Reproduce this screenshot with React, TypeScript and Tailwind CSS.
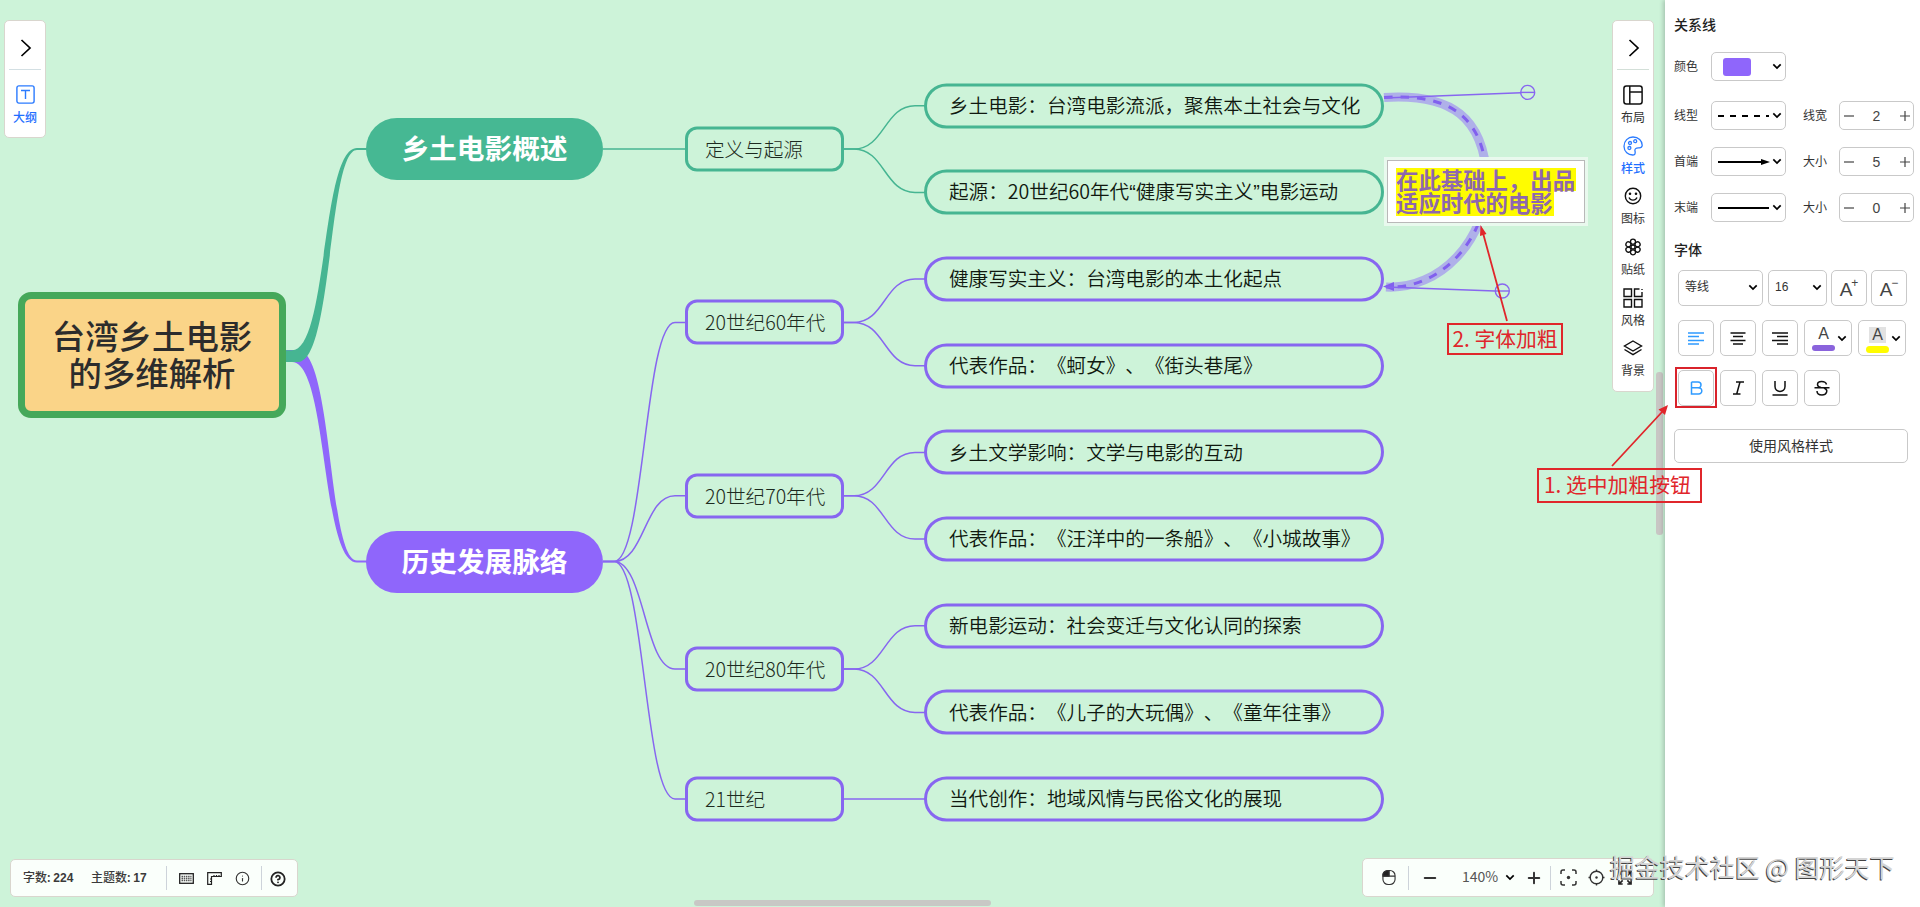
import React from 'react';
import { Info, CircleHelp, Minus, Plus } from 'lucide-react';

type Tone = 'green' | 'purple';

interface Leaf {
  text: string;
  y: number;
}

interface Topic {
  text: string;
  y: number;
  leaves: Leaf[];
}

interface Branch {
  text: string;
  y: number;
  tone: Tone;
  topics: Topic[];
}

const COLORS: Record<Tone, string> = { green: '#46b592', purple: '#8766f0' };

const branches: Branch[] = [
  {
    text: '乡土电影概述',
    y: 149,
    tone: 'green',
    topics: [
      {
        text: '定义与起源',
        y: 149,
        leaves: [
          { text: '乡土电影：台湾电影流派，聚焦本土社会与文化', y: 105.7 },
          { text: '起源：20世纪60年代“健康写实主义”电影运动', y: 192.4 },
        ],
      },
    ],
  },
  {
    text: '历史发展脉络',
    y: 561.5,
    tone: 'purple',
    topics: [
      {
        text: '20世纪60年代',
        y: 322.4,
        leaves: [
          { text: '健康写实主义：台湾电影的本土化起点', y: 279 },
          { text: '代表作品：《蚵女》、《街头巷尾》', y: 365.7 },
        ],
      },
      {
        text: '20世纪70年代',
        y: 495.8,
        leaves: [
          { text: '乡土文学影响：文学与电影的互动', y: 452.4 },
          { text: '代表作品：《汪洋中的一条船》、《小城故事》', y: 539 },
        ],
      },
      {
        text: '20世纪80年代',
        y: 669,
        leaves: [
          { text: '新电影运动：社会变迁与文化认同的探索', y: 625.7 },
          { text: '代表作品：《儿子的大玩偶》、《童年往事》', y: 712.4 },
        ],
      },
      {
        text: '21世纪',
        y: 799,
        leaves: [{ text: '当代创作：地域风情与民俗文化的展现', y: 799 }],
      },
    ],
  },
];

const link = (x1: number, y1: number, x2: number, y2: number) => {
  const a = x1 + 11;
  const b = x2 - 11;
  const m = (a + b) / 2;
  return `M${x1} ${y1}H${a}C${m} ${y1} ${m} ${y2} ${b} ${y2}H${x2}`;
};

const Links: React.FC = () => (
  <svg className="absolute inset-0" width="1664" height="907" fill="none">
    {/* tapered trunks */}
    <path d="M286 350H298C333 350 328 560.5 357 560.5H367V562.5H357C321 562.5 328 362 292 362H286Z" fill="#8f66fb" />
    <path d="M286 350.3H292C328 350.3 321 148 357 148H367V150H357C328 150 333 362 298 362H286Z" fill="#46b592" />
    {branches.map(b =>
      b.topics.map(t => (
        <g key={t.text} stroke={COLORS[b.tone]} strokeWidth="1.5">
          <path d={link(603, b.y, 686, t.y)} />
          {t.leaves.map(l => (
            <path key={l.text} d={link(843, t.y, 926, l.y)} />
          ))}
        </g>
      ))
    )}
  </svg>
);

const Node: React.FC<{ y: number; className: string; children: React.ReactNode }> = ({ y, className, children }) => (
  <div className={`absolute flex -translate-y-1/2 items-center whitespace-nowrap ${className}`} style={{ top: y }}>
    {children}
  </div>
);

// curly quotes are full width in the CJK face, so they take the Latin one
const withQuotes = (text: string) =>
  text.split(/([“”])/).map((part, i) =>
    part === '“' || part === '”' ? <span key={i} className="font-['Liberation_Sans',sans-serif]">{part}</span> : part
  );

const MindMap: React.FC = () => (
  <>
    <Links />
    <Node y={355.3} className="left-[18px] h-[126px] w-[268px] justify-center rounded-[13px] border-[7px] border-[#45a85a] bg-[#fad488] pb-[4px] text-center text-[33.4px] leading-[37px] font-medium text-[#2c2c2c]">
      <span>台湾乡土电影<br />的多维解析</span>
    </Node>
    {branches.map(b => (
      <React.Fragment key={b.text}>
        <Node y={b.y} className={`left-[366px] h-[62px] w-[237px] justify-center rounded-full pb-[2px] text-[27.7px] font-bold text-white ${b.tone === 'green' ? 'bg-[#46b893]' : 'bg-[#8f66fb]'}`}>
          {b.text}
        </Node>
        {b.topics.map(t => (
          <React.Fragment key={t.text}>
            <Node y={t.y} className={`left-[685px] h-[45px] w-[159px] rounded-[12px] border-[3px] pb-[2px] pl-[17px] text-[19.6px] font-light text-[#1c2a20] ${b.tone === 'green' ? 'border-[#46b592]' : 'border-[#8766f0]'}`}>
              {t.text}
            </Node>
            {t.leaves.map(l => (
              <Node key={l.text} y={l.y} className={`left-[924px] h-[45px] w-[460px] rounded-full border-[3px] pb-[3px] pl-[22px] text-[19.6px] text-[#10180f] ${b.tone === 'green' ? 'border-[#46b592]' : 'border-[#8766f0]'}`}>
                <span className="font-[350]">{withQuotes(l.text)}</span>
              </Node>
            ))}
          </React.Fragment>
        ))}
      </React.Fragment>
    ))}
  </>
);

const RELATION = 'M1384 97.5C1452 93 1484 118 1487 180C1487 240 1440 290 1386 287';

const Relation: React.FC = () => (
  <>
    <svg className="absolute inset-0" width="1664" height="907" fill="none">
      <path d={RELATION} stroke="#8f66fb" strokeOpacity="0.48" strokeWidth="9" />
      <path d={RELATION} stroke="#8160ee" strokeWidth="3" strokeDasharray="8.5 8" />
      <path d="M1383 286.5L1394 282V291Z" fill="#8160ee" />
      <g stroke="#8766f0" strokeWidth="1.4">
        <path d="M1384 98L1521 92.7M1386 287L1495 291" />
        <circle cx="1527.7" cy="92.4" r="7" />
        <path d="M1521 92.4H1534" />
        <circle cx="1502.3" cy="291" r="7" />
        <path d="M1495 291H1509" />
      </g>
    </svg>
    <div className="absolute top-[160px] left-[1387px] h-[63px] w-[198px] border border-[#b9b9b9] bg-white pt-[7px] pl-[8px] shadow-[0_0_0_3px_#e9f9ee] text-[22.4px] leading-[22.4px] font-bold text-[#8e67ae]">
      <div className="h-[23px] w-[180px] bg-[#fffc00] whitespace-nowrap">在此基础上，出品</div>
      <div className="h-[25px] w-[158px] bg-[#fffc00] whitespace-nowrap">适应时代的电影</div>
    </div>
  </>
);

const Chevron: React.FC = () => (
  <svg width="12" height="18" viewBox="0 0 12 18" fill="none" stroke="#000" strokeWidth="1.7">
    <path d="M1.5 1L10 9L1.5 17" />
  </svg>
);

const Caret: React.FC = () => (
  <svg width="10" height="7" viewBox="0 0 10 7" fill="none" stroke="#000" strokeWidth="1.7" className="shrink-0">
    <path d="M1.3 1.3L5 5L8.7 1.3" />
  </svg>
);

const LayoutIcon = () => (
  <svg width="20" height="20" viewBox="0 0 20 20" fill="none" stroke="#111" strokeWidth="1.5">
    <rect x="0.9" y="0.9" width="18.2" height="18.2" rx="2.5" />
    <path d="M6.8 1V19M6.8 7H19" />
  </svg>
);

const PaletteIcon = () => (
  <svg width="20" height="20" viewBox="0 0 20 20" fill="none" stroke="#2b7bff" strokeWidth="1.3">
    <path d="M11 18.9C5 19.6 1 15.3 1 10.2C1 5 5 1 10 1C15.5 1 19.3 5 19.2 9.5C19 11.2 17.5 12 15.5 11.8C13 11.7 11.5 13 12 15C12.3 16.5 12.4 18.4 11 18.9Z" />
    <circle cx="7" cy="7" r="1.5" />
    <circle cx="12.2" cy="5.2" r="1.5" />
    <circle cx="6.4" cy="12" r="1.5" />
  </svg>
);

const SmileIcon = () => (
  <svg width="18" height="18" viewBox="0 0 18 18" fill="none" stroke="#111" strokeWidth="1.4">
    <circle cx="9" cy="9" r="7.7" />
    <path d="M5 10.5C6.5 14 11.5 14 13 10.5" />
    <circle cx="6" cy="6.8" r="0.6" fill="#111" />
    <circle cx="12" cy="6.8" r="0.6" fill="#111" />
  </svg>
);

const FlowerIcon = () => (
  <svg width="18" height="18" viewBox="-9 -9 18 18" fill="none" stroke="#111" strokeWidth="1.3">
    {[0, 60, 120, 180, 240, 300].map(a => (
      <circle key={a} cx="0" cy="-5.3" r="2.5" transform={`rotate(${a})`} />
    ))}
    <circle r="2" />
  </svg>
);

const GridIcon = () => (
  <svg width="20" height="20" viewBox="0 0 20 20" fill="none" stroke="#111" strokeWidth="1.4">
    <path d="M1 1H8.5V8.5H1ZM1 11.5H8.5V19H1ZM11.5 11.5H19V19H11.5ZM16.5 1H11.5V8.5H19V4M19 1V2" />
  </svg>
);

const LayersIcon = () => (
  <svg width="20" height="16" viewBox="0 0 20 16" fill="none" stroke="#111" strokeWidth="1.4">
    <path d="M10 1L18.5 6L10 11L1.5 6Z" />
    <path d="M1.5 9.5L10 14.6L18.5 9.5" />
  </svg>
);

const tools = [
  { label: '布局', icon: <LayoutIcon /> },
  { label: '样式', icon: <PaletteIcon />, active: true },
  { label: '图标', icon: <SmileIcon /> },
  { label: '贴纸', icon: <FlowerIcon /> },
  { label: '风格', icon: <GridIcon /> },
  { label: '背景', icon: <LayersIcon /> },
];

const OutlineBar: React.FC = () => (
  <div className="absolute top-[20px] left-[4px] flex h-[118px] w-[42px] flex-col items-center rounded-[5px] border border-[#d9d6ce] bg-white">
    <div className="flex h-[49px] w-[32px] items-center justify-center border-b border-[#d3dfe3] pt-[6px] pl-px">
      <Chevron />
    </div>
    <svg className="mt-[15px]" width="19" height="19" viewBox="0 0 19 19" fill="none" stroke="#2b7bff" strokeWidth="1.4">
      <rect x="0.9" y="0.9" width="17.2" height="17.2" rx="2" />
      <path d="M5 5.5H14M9.5 5.5V14" />
    </svg>
    <span className="mt-[5px] text-xs leading-4 font-medium text-[#1f6fff]">大纲</span>
  </div>
);

const ToolBar: React.FC = () => (
  <div className="absolute top-[20px] left-[1612px] flex h-[372px] w-[42px] flex-col items-center rounded-[5px] border border-[#d9d6ce] bg-white">
    <div className="mb-[13px] flex h-[49px] w-[32px] items-center justify-center border-b border-[#d3dfd8] pt-[6px] pl-px">
      <Chevron />
    </div>
    {tools.map(t => (
      <div key={t.label} className={`flex h-[50.7px] w-full shrink-0 flex-col items-center text-xs leading-4 ${t.active ? 'font-medium text-[#1f6fff]' : 'text-[#333]'}`}>
        <span className="flex h-6 items-center">{t.icon}</span>
        <span className="mt-[2px]">{t.label}</span>
      </div>
    ))}
  </div>
);

const StatusBar: React.FC = () => (
  <div className="absolute top-[859px] left-[10px] flex h-[38px] w-[288px] items-center rounded-[5px] border border-[#d9d6ce] bg-[#fafffb] pl-[12px] text-xs font-medium text-[#3a3a3a]">
    <span className="w-[68px] whitespace-nowrap pb-[2px]">字数: <span className="font-['Liberation_Sans',sans-serif] font-bold">224</span></span>
    <span className="w-[75px] whitespace-nowrap pb-[2px]">主题数: <span className="font-['Liberation_Sans',sans-serif] font-bold">17</span></span>
    <span className="h-6 w-px bg-[#cdd3da]" />
    <svg className="mt-px ml-[12px]" width="15" height="11" viewBox="0 0 15 11" fill="none" stroke="#222" strokeWidth="1.3">
      <rect x="0.7" y="0.7" width="13.6" height="9.6" />
      <path d="M2.5 3.5H12.5M2.5 5.5H12.5M2.5 7.5H12.5" strokeDasharray="1.5 0.7" stroke="#555" />
    </svg>
    <svg className="ml-[13px]" width="15" height="13" viewBox="0 0 15 13" fill="none" stroke="#222" strokeWidth="1.2">
      <path d="M0.7 0.7H14.3V4.5H4.5V12.3H0.7ZM3 7H4.5M3 9.5H4.5M7 3V4.5M9.5 3V4.5M12 3V4.5" />
    </svg>
    <Info size={15} strokeWidth={1.8} className="mt-px ml-[13px] text-[#333]" />
    <span className="ml-[11px] h-6 w-px bg-[#cdd3da]" />
    <CircleHelp size={16} strokeWidth={2.7} className="mt-px ml-[8px] text-[#222]" />
  </div>
);

const ZoomBar: React.FC = () => (
  <div className="absolute top-[858px] left-[1362px] flex h-[39px] w-[292px] items-center rounded-[5px] border border-[#d9d6ce] bg-[#fafffb] pl-[19px] text-[#333]">
    <svg width="14" height="17" viewBox="0 0 15 17" fill="none" stroke="#333" strokeWidth="1.2">
      <rect x="1" y="1" width="13" height="15" rx="5.5" />
      <path d="M1 7H14M7.5 1V7" />
      <path d="M1 7V5C1.5 2.5 4 1 7.5 1V7Z" fill="#222" />
    </svg>
    <span className="ml-[12px] h-6 w-px bg-[#cdd3da]" />
    <Minus size={18} strokeWidth={2.6} className="ml-[12px]" />
    <span className="ml-[23px] w-[43px] pb-[2px] text-[14px] text-[#555]">140%</span>
    <Caret />
    <Plus size={18} strokeWidth={2.6} className="ml-[10px]" />
    <span className="ml-[7px] h-6 w-px bg-[#cdd3da]" />
    <svg className="ml-[9px]" width="17" height="17" viewBox="0 0 17 17" fill="none" stroke="#333" strokeWidth="1.5">
      <path d="M1 5V3Q1 1 3 1H5M12 1H14Q16 1 16 3V5M16 12V14Q16 16 14 16H12M5 16H3Q1 16 1 14V12" />
      <circle cx="8.5" cy="8.5" r="1.7" fill="#333" stroke="none" />
    </svg>
    <svg className="ml-[11px]" width="17" height="17" viewBox="0 0 17 17" fill="none" stroke="#333" strokeWidth="1.4">
      <circle cx="8.5" cy="8.5" r="6.3" />
      <path d="M8.5 0.5V3M8.5 14V16.5M0.5 8.5H3M14 8.5H16.5" />
      <circle cx="8.5" cy="8.5" r="1.2" fill="#333" stroke="none" />
    </svg>
    <svg className="ml-[13px]" width="14" height="14" viewBox="0 0 15 15" fill="none" stroke="#222" strokeWidth="1.7">
      <path d="M1 5V1H5M10 1H14V5M14 10V14H10M5 14H1V10M1 1L5 5M14 1L10 5M14 14L10 10M1 14L5 10" />
    </svg>
  </div>
);

const box = 'flex items-center rounded-[5px] border border-[#c9c9c9] bg-white';

const Stepper: React.FC<{ value: number }> = ({ value }) => (
  <div className={`${box} h-[29px] w-[75px] justify-between pr-[3px] pl-[4px] text-sm text-[#444]`}>
    <svg width="10" height="10" stroke="#444" strokeWidth="1.2"><path d="M0 5H10" /></svg>
    <span className="-ml-px">{value}</span>
    <svg width="10" height="10" stroke="#444" strokeWidth="1.2"><path d="M0 5H10M5 0V10" /></svg>
  </div>
);

const lineRows = [
  { label: '线型', size: '线宽', value: 2, line: <path d="M0 5H51" strokeDasharray="6 6" /> },
  { label: '首端', size: '大小', value: 5, line: <><path d="M0 5H46" /><path d="M43 2L52 5L43 8Z" fill="#000" stroke="none" /></> },
  { label: '末端', size: '大小', value: 0, line: <path d="M0 5H51" /> },
];

const AlignIcon: React.FC<{ d: string; color?: string }> = ({ d, color = '#111' }) => (
  <svg width="16" height="13" viewBox="0 0 16 13" fill="none" stroke={color} strokeWidth="1.4">
    <path d={d} />
  </svg>
);

const sq = `${box} size-9 justify-center`;

const StylePanel: React.FC = () => (
  <aside className="relative h-full w-[255px] shrink-0 bg-white pl-[9px] text-xs text-[#333] shadow-[-2px_0_4px_rgba(0,0,0,0.18)]">
    <h3 className="pt-[17px] text-sm leading-4 font-medium text-[#222]">关系线</h3>
    <div className="mt-[19px] flex h-[29px] items-center">
      <span className="w-[37px]">颜色</span>
      <div className={`${box} h-[29px] w-[75px] justify-between pr-[3px] pl-[11px]`}>
        <span className="h-[18px] w-[28px] rounded-[3px] bg-[#8f66fb]" />
        <Caret />
      </div>
    </div>
    <div className="mt-[20px] flex flex-col gap-[17px]">
      {lineRows.map(r => (
        <div key={r.label} className="flex h-[29px] items-center">
          <span className="w-[37px]">{r.label}</span>
          <div className={`${box} h-[29px] w-[75px] justify-between pr-[3px] pl-[6px]`}>
            <svg width="53" height="10" fill="none" stroke="#000" strokeWidth="2">{r.line}</svg>
            <Caret />
          </div>
          <span className="ml-[17px] w-[36px]">{r.size}</span>
          <Stepper value={r.value} />
        </div>
      ))}
    </div>

    <h3 className="mt-[20px] text-sm leading-4 font-medium text-[#222]">字体</h3>
    <div className="mt-[12px] flex gap-[5px] pl-1">
      <div className={`${box} h-9 w-[85px] justify-between pr-[4px] pb-[2px] pl-[6px]`}>等线<Caret /></div>
      <div className={`${box} h-9 w-[59px] justify-between pr-[4px] pb-[2px] pl-[6px]`}>16<Caret /></div>
      <div className={`${sq} -ml-px`}>
        <span className="flex pt-[3px] text-[19px] leading-5 text-[#444]">A<i className="-mt-[3px] -ml-px text-xs leading-3 not-italic">+</i></span>
      </div>
      <div className={`${sq} -ml-px`}>
        <span className="flex pt-[3px] text-[19px] leading-5 text-[#444]">A<i className="-mt-[3px] -ml-px text-xs leading-3 not-italic">−</i></span>
      </div>
    </div>
    <div className="mt-[14px] flex gap-[6px] pl-1">
      <div className={sq}><AlignIcon color="#2f9bff" d="M0 1H16M0 4.5H11M0 8.5H16M0 12H11" /></div>
      <div className={sq}><AlignIcon d="M0.5 1H15.5M3 4.5H13M0.5 8.5H15.5M3 12H13" /></div>
      <div className={sq}><AlignIcon d="M0 1H16M5 4.5H16M0 8.5H16M5 12H16" /></div>
      <div className={`${box} h-9 w-[48px] justify-between pr-[4px] pl-[7px]`}>
        <span className="flex flex-col items-center text-[16px] leading-[18px] text-[#444]">A<i className="mt-[2px] h-[6px] w-[23px] rounded-full bg-[#8a63dc]" /></span>
        <Caret />
      </div>
      <div className={`${box} h-9 w-[48px] justify-between pr-[4px] pl-[7px]`}>
        <span className="flex flex-col items-center pt-[3px] text-[16px] leading-[16px] text-[#444]"><b className="bg-[#e2e2e2] px-[3px] font-normal">A</b><i className="mt-[3px] h-[7px] w-[23px] rounded-full bg-[#fffc00]" /></span>
        <Caret />
      </div>
    </div>
    <div className="mt-[14px] flex gap-[6px] pl-1">
      <div className={sq}>
        <svg width="13" height="14" viewBox="0 0 13 14" fill="none" stroke="#2f9bff" strokeWidth="1.5">
          <path d="M1.5 1H8C12 1 12 6.8 8 6.8H1.5M8 6.8C13 6.8 13 13 8.5 13H1.5V1" />
        </svg>
      </div>
      <div className={sq}>
        <svg width="13" height="14" viewBox="0 0 13 14" fill="none" stroke="#111" strokeWidth="1.5">
          <path d="M4 1H12M1 13H8.5M8 1L4.7 13" />
        </svg>
      </div>
      <div className={sq}>
        <svg width="16" height="16" viewBox="0 0 16 16" fill="none" stroke="#111" strokeWidth="1.5">
          <path d="M3 1V6.5C3 13 13 13 13 6.5V1M0.5 15H15.5" />
        </svg>
      </div>
      <div className={sq}>
        <svg width="16" height="16" viewBox="0 0 16 16" fill="none" stroke="#111" strokeWidth="1.5">
          <path d="M12.5 4.5C11.5 0.5 3.5 0.5 3.5 4.5C3.5 6 4.5 7 7 7.5M0.5 7.7H15.5M10 8C15 10 12.5 15 8 15C5 15 3 13.5 3 11" />
        </svg>
      </div>
    </div>
    <button className="mt-[23px] flex h-[34px] w-[234px] items-center justify-center rounded-[5px] border border-[#c9c9c9] text-sm text-[#333]">使用风格样式</button>
  </aside>
);

const Annotations: React.FC = () => (
  <div className="font-['Noto_Sans_CJK_SC',sans-serif] text-[20.8px] whitespace-nowrap text-[#e0262b]">
    <div className="absolute top-[323px] left-[1447px] flex h-[32px] w-[116px] items-center justify-center border-2 border-[#e0262b]">2. 字体加粗</div>
    <div className="absolute top-[468px] left-[1537px] flex h-[35px] w-[165px] items-center border-2 border-[#e0262b] pb-[2px] pl-[5px]">1. 选中加粗按钮</div>
    <div className="absolute top-[367px] left-[1675px] h-[41px] w-[42px] border-2 border-[#d9232b]" />
    <svg className="absolute inset-0" width="1920" height="907" fill="none" stroke="#e0262b" strokeWidth="1.8">
      <path d="M1507 321L1483 233M1612 466L1662 412" />
      <path d="M1480.5 225L1486.5 234L1480 236ZM1668 405L1665 415L1658.5 409.5Z" fill="#e0262b" stroke="none" />
    </svg>
  </div>
);

const App: React.FC = () => (
  <div className="relative flex h-[907px] w-[1920px] overflow-hidden bg-white font-['Liberation_Sans','Noto_Sans_CJK_SC',sans-serif] [text-spacing-trim:space-all]">
    <main className="relative h-full min-w-0 flex-1 bg-[#cdf3d9] font-['Noto_Sans_CJK_SC',sans-serif]">
      <MindMap />
      <Relation />
      <OutlineBar />
      <ToolBar />
      <StatusBar />
      <ZoomBar />
      <div className="absolute top-[900px] left-[694px] h-[6px] w-[297px] rounded-full bg-[#c8c8c5]" />
      <div className="absolute top-[372px] left-[1656px] h-[163px] w-[7px] rounded-[3px] bg-[#c8c6c4]" />
    </main>
    <StylePanel />
    <Annotations />
    <div className="absolute top-[848px] left-[1610px] font-['Noto_Sans_CJK_SC',sans-serif] text-[25px] leading-[36px] whitespace-nowrap text-[#d4d4d4] [text-shadow:-1px_1px_0px_#444]">掘金技术社区 @ 图形天下</div>
  </div>
);

export default App;
